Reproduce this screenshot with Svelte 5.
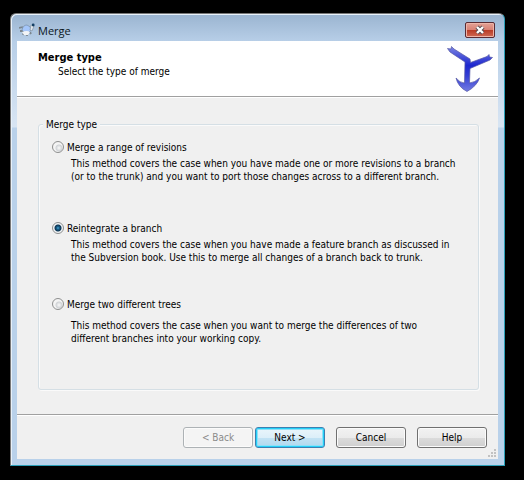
<script lang="ts">
  interface MergeOption {
    id: string;
    label: string;
    /** Newlines are kept when the text is shown. */
    text: string;
  }

  const options: MergeOption[] = [
    {
      id: 'range',
      label: 'Merge a range of revisions',
      text: 'This method covers the case when you have made one or more revisions to a branch\n(or to the trunk) and you want to port those changes across to a different branch.',
    },
    {
      id: 'reintegrate',
      label: 'Reintegrate a branch',
      text: 'This method covers the case when you have made a feature branch as discussed in\nthe Subversion book. Use this to merge all changes of a branch back to trunk.',
    },
    {
      id: 'trees',
      label: 'Merge two different trees',
      text: 'This method covers the case when you want to merge the differences of two\ndifferent branches into your working copy.',
    },
  ];

  let selected = $state('reintegrate');
</script>

<main>
  <div class="window">
    <div class="titlebar">
      <svg class="turtle" viewBox="0 0 16 14" aria-hidden="true">
        <path d="M0 5 L4 4 M1 8 L5 8 M5 9 L4 12 M8 10 L8 13 M11 9 L12 11" stroke="#7b868f" stroke-width="1.8" />
        <path d="M3 7 Q4 2 8 2 Q12 3 12 7 Q10 11 6 10 Z" fill="#a4c6fa" stroke="#7c93ac" stroke-width=".8" />
        <path d="M3 9 Q8 7 11 9 L9 12 L5 12 Z" fill="#f2f4f6" />
        <path d="M11 7 L12 2 L15 3 L13 8 Z" fill="#dfe5ea" stroke="#778899" stroke-width=".6" />
        <circle cx="14.2" cy="2" r="1.4" fill="#143f63" />
      </svg>
      <span class="caption">Merge</span>
      <button class="close" aria-label="Close">
        <svg viewBox="0 0 12 10" aria-hidden="true">
          <path d="M3 2 L9 8 M9 2 L3 8" stroke="#54494f" stroke-width="4.2" />
          <path d="M3 2 L9 8 M9 2 L3 8" stroke="#fff" stroke-width="2.4" />
        </svg>
      </button>
    </div>

    <div class="client">
      <header>
        <div>
          <h1>Merge type</h1>
          <p>Select the type of merge</p>
        </div>
        <svg class="arrow" viewBox="0 0 46 46" aria-hidden="true">
          <defs>
            <linearGradient id="branch" x1="0" y1="0" x2="0" y2="1">
              <stop offset="0" stop-color="#7c85e2" />
              <stop offset=".42" stop-color="#1d27cf" />
              <stop offset=".65" stop-color="#343ed4" />
              <stop offset="1" stop-color="#747ce2" />
            </linearGradient>
          </defs>
          <path
            d="M.5 2.500 L4 3 L4.500 .5 L7 3 L23 13 L23.500 16.500 L40 10.500 L42 8.500 L42.500 11 L45.500 11.500 L43 14 L23 22.500 L22.500 37 Q28 36.500 32.500 32 Q30 40 20 45.500 Q11 41 9 32 Q13 37 17.500 37 L18 16 L3 6 Z"
            fill="url(#branch)"
            stroke="#5558a4"
            stroke-width=".7"
          />
        </svg>
      </header>

      <div class="page">
        <fieldset>
          <legend>Merge type</legend>
          {#each options as option (option.id)}
            <div class="option">
              <label>
                <input
                  type="radio"
                  name="merge-type"
                  value={option.id}
                  aria-describedby="{option.id}-text"
                  bind:group={selected}
                />
                {option.label}
              </label>
              <p id="{option.id}-text">{option.text}</p>
            </div>
          {/each}
        </fieldset>
      </div>

      <footer>
        <div class="steps">
          <button disabled>&lt; Back</button>
          <button class="default">Next &gt;</button>
        </div>
        <button>Cancel</button>
        <button>Help</button>
        <svg class="grip" viewBox="0 0 8 8" aria-hidden="true">
          <path d="M6 0h2v2h-2z M3 3h2v2h-2z M6 3h2v2h-2z M0 6h2v2h-2z M3 6h2v2h-2z M6 6h2v2h-2z" fill="#c2c2c2" />
        </svg>
      </footer>
    </div>
  </div>
</main>

<style>
  :global(body) { margin: 0; background: #000; }

  main {
    box-sizing: border-box; min-height: 100vh; padding: 13px 19px 14px 10px;
    font-family: "DejaVu Sans Condensed", Tahoma, sans-serif;
    font-size: 10px; line-height: 13px; color: #000;
  }
  h1, p { margin: 0; }
  h1 { font-size: 11px; }

  .window {
    padding: 0 6px 6px 5px;
    border: 1px solid #2b9fb8; border-left-color: #777; border-top-color: #777;
    border-radius: 6px 6px 0 0;
    box-shadow: inset 1px 1px #e8f1fa;
    background: linear-gradient(#9ab4d0, #b8cfe8 28px, #d8e5f3 113px, #b9d1ea 114px);
  }

  .titlebar {
    display: flex; align-items: center; height: 27px; padding: 5px 3px 0 3px;
    box-sizing: border-box;
  }
  .turtle { width: 16px; height: 14px; fill: none; }
  .caption {
    flex: 1; margin-left: 3px;
    font-family: "Open Sans", sans-serif; font-size: 11px; color: #0b1622;
  }
  .close {
    display: flex; align-items: center; justify-content: center;
    width: 30px; height: 16px; padding: 0;
    border: 1px solid #5a2b33; border-radius: 2px;
    box-shadow: inset 0 0 0 1px #eeb4a8;
    background: linear-gradient(#e3a196, #d98174 50%, #b93a24 50%, #cf6a55);
  }
  .close svg { width: 12px; height: 10px; }

  .client { margin-left: 1px; background: #f0f0f0; }

  header {
    display: flex; justify-content: space-between;
    height: 55px; padding: 0 5px 0 21px;
    background: #fff; border-bottom: 1px solid #a0a0a0;
  }
  header div { padding-top: 10px; }
  header p { padding: 1px 0 0 20px; }
  .arrow { width: 46px; height: 46px; margin-top: 5px; }

  .page { padding: 20px 19px 24px 21px; border-top: 1px solid #fff; }
  fieldset {
    display: flex; flex-direction: column; gap: 32px;
    margin: 0; padding: 8px 13px 44px;
    border: 1px solid #d5dfe5; border-radius: 3px;
    box-shadow: inset 1px 1px #fafafa, 1px 1px #fafafa;
  }
  legend { margin-left: -9px; padding: 0 3px; background: #f0f0f0; }

  label { display: flex; align-items: center; gap: 3px; height: 16px; }
  input {
    appearance: none; box-sizing: border-box; width: 12px; height: 12px; margin: 0;
    border: 1px solid #8e8f8f; border-radius: 50%;
    background: radial-gradient(circle at 60% 60%, #fafafa, #d0d3d6 3px, #f4f4f4 4px);
  }
  input:checked {
    background: radial-gradient(circle, #6cc4ea, #1a6a98 1px, #0f3553 3px, #f0f3f5 4px);
  }
  .option p { padding: 2px 0 0 19px; white-space: pre-line; }
  .option:first-of-type p { padding-bottom: 5px; }
  .option:last-of-type p { padding-top: 7px; }

  footer {
    position: relative; display: flex; justify-content: flex-end; gap: 11px;
    padding: 12px 11px 11px; border-top: 1px solid #a0a0a0;
    box-shadow: inset 0 1px #fff;
  }
  .steps { display: flex; gap: 2px; }
  footer button {
    width: 70px; height: 21px; padding: 0;
    font: inherit; color: #000;
    border: 1px solid #707070; border-radius: 3px;
    box-shadow: inset 0 0 0 1px #fbfbfb;
    background: linear-gradient(#f2f2f2, #ebebeb 50%, #dcdcdc 50%, #cfcfcf);
  }
  footer button:disabled { color: #8b8b8b; border-color: #adb2b5; background: #f4f4f4; }
  footer .default {
    border-color: #3c7fb1; box-shadow: inset 0 0 0 1px #24d0f8, inset 0 0 0 2px #8fe0f8;
    background: linear-gradient(#eaf5fb, #dceff9 50%, #c3e3f4 50%, #b0d8ee);
  }
  .grip { position: absolute; right: 2px; bottom: 2px; width: 8px; height: 8px; }
</style>
